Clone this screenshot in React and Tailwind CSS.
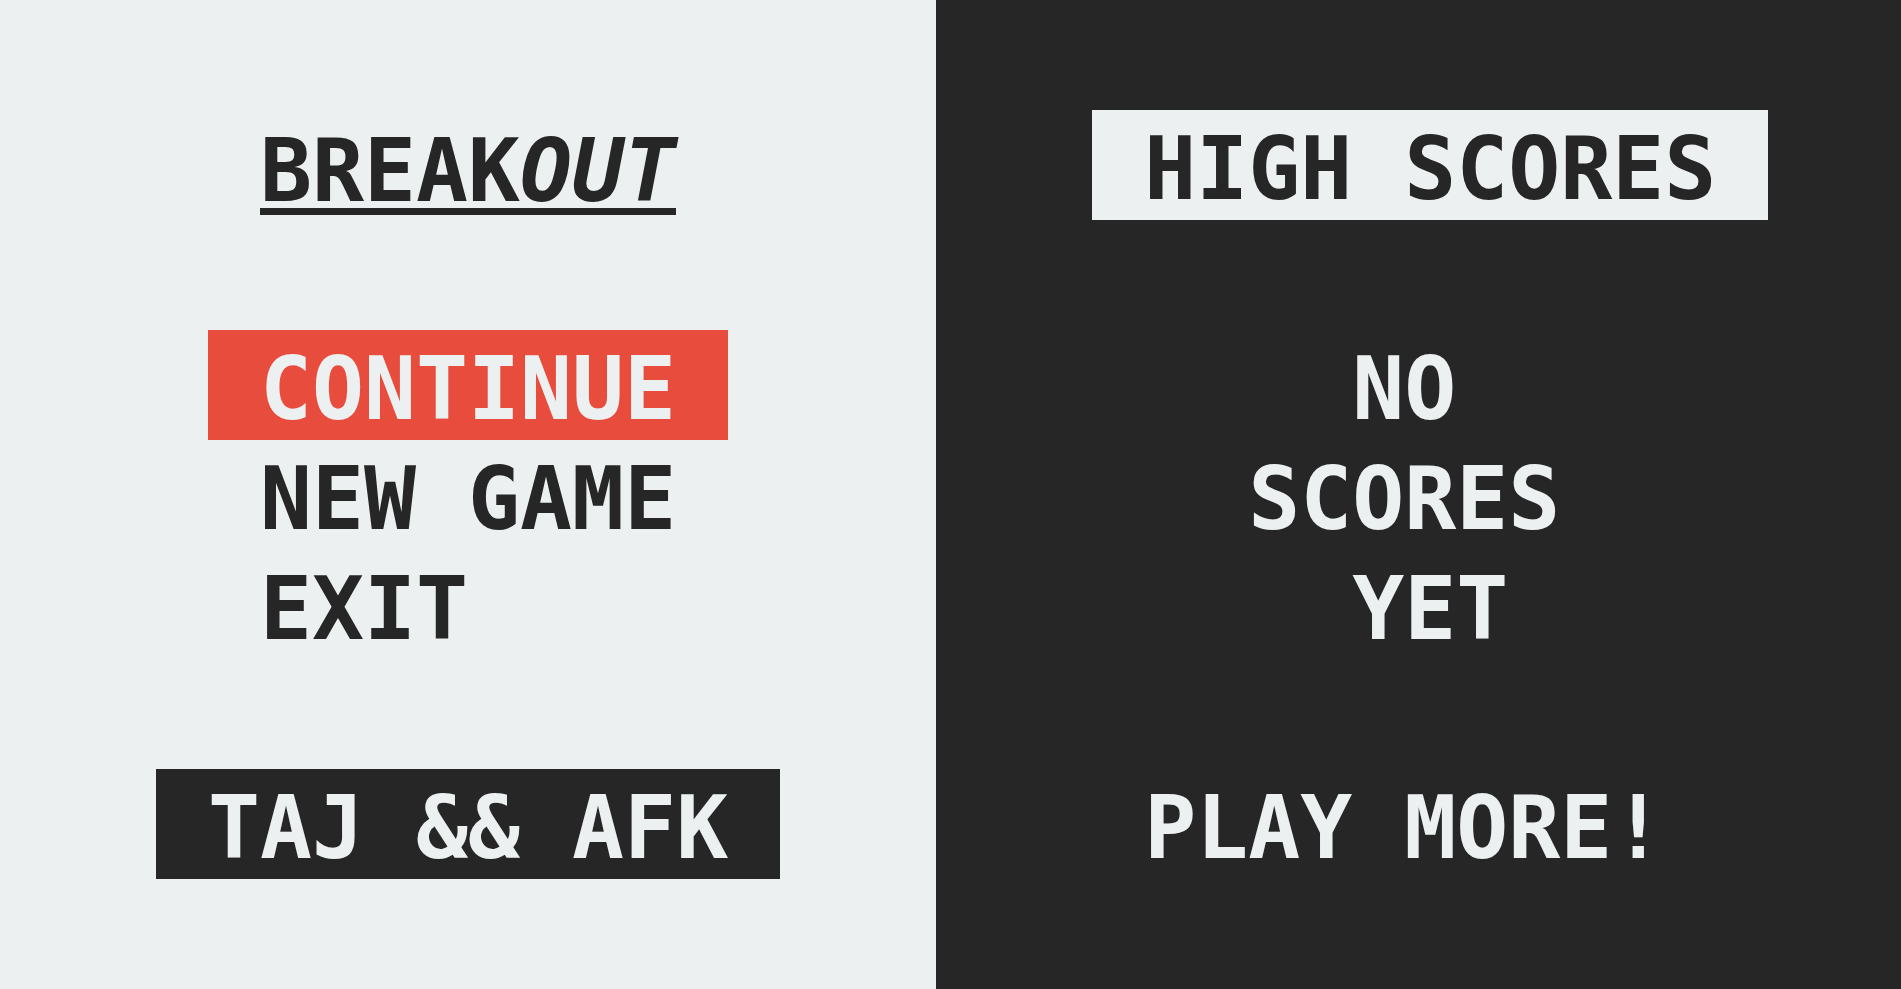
export default function App() {
  return (
    <div className="flex h-screen w-full overflow-hidden whitespace-pre font-['DejaVu_Sans_Mono',monospace] text-[86.4px] font-bold leading-none">
      <div className="grid h-full w-[18ch] shrink-0 grid-rows-9 bg-[#ecf0f1] text-[#262626]">
        <div />
        <div className="flex items-start pl-[5ch] pt-[18px]">
          <span className="inline-block h-[87px] border-b-[7px] border-[#262626]">
            BREAK<em className="italic">OUT</em>
          </span>
        </div>
        <div />
        <div className="flex items-stretch pl-[4ch]">
          <div className="flex w-[10ch] items-center bg-[#e74c3c] pl-[1ch] pt-[9px] text-[#ecf0f1]">CONTINUE</div>
        </div>
        <div className="flex items-center pl-[5ch] pt-[9px]">NEW GAME</div>
        <div className="flex items-center pl-[5ch] pt-[9px]">EXIT</div>
        <div />
        <div className="flex items-stretch pl-[3ch]">
          <div className="flex w-[12ch] items-center bg-[#262626] pl-[1ch] pt-[9px] text-[#ecf0f1]">TAJ &amp;&amp; AFK</div>
        </div>
        <div />
      </div>
      <div className="grid h-full flex-1 grid-rows-9 bg-[#262626] text-[#ecf0f1]">
        <div />
        <div className="flex items-stretch pl-[3ch]">
          <div className="flex w-[13ch] items-center bg-[#ecf0f1] pl-[1ch] pt-[9px] text-[#262626]">HIGH SCORES</div>
        </div>
        <div />
        <div className="flex items-center pl-[8ch] pt-[9px]">NO</div>
        <div className="flex items-center pl-[6ch] pt-[9px]">SCORES</div>
        <div className="flex items-center pl-[8ch] pt-[9px]">YET</div>
        <div />
        <div className="flex items-center pl-[4ch] pt-[9px]">PLAY MORE!</div>
        <div />
      </div>
    </div>
  );
}
